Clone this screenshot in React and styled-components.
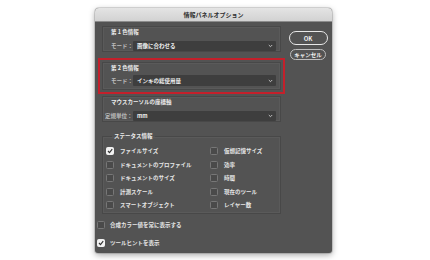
import styled, { createGlobalStyle } from 'styled-components';

const Global = createGlobalStyle`
  body {
    margin: 0;
    background: #ffffff;
    font-family: "Noto Sans CJK JP", "Noto Sans", sans-serif;
  }
`;

const Page = styled.div`
  width: 430px;
  height: 260px;
  padding: 8px 0 0 95px;
  box-sizing: border-box;
`;

const Dialog = styled.div`
  width: 237px;
  height: 245px;
  background: #535353;
  border-radius: 4px 4px 3px 3px;
  box-shadow: 0 2px 6px rgba(0, 0, 0, 0.35), 0 0 0 1px rgba(0, 0, 0, 0.12);
  overflow: hidden;
  display: flex;
  flex-direction: column;
`;

const TitleBar = styled.div`
  height: 13px;
  background: linear-gradient(#e4e4e4, #d2d2d2);
  border-bottom: 1px solid #8c8c8c;
  color: #2e2e2e;
  font-size: 6px;
  font-weight: 700;
  line-height: 13px;
  text-align: center;
`;

const Body = styled.div`
  flex: 1;
  display: flex;
  padding: 3px 4px 0 7px;
  gap: 8px;
`;

const Main = styled.div`
  width: 179px;
  display: flex;
  flex-direction: column;
`;

const Side = styled.div`
  display: flex;
  flex-direction: column;
  align-items: center;
  gap: 4px;
  padding-top: 6px;
  width: 38px;
`;

const Button = styled.div`
  width: ${p => (p.$primary ? 37 : 34)}px;
  height: ${p => (p.$primary ? 12 : 9)}px;
  border: ${p => (p.$primary ? '1.5px solid #e8e8e8' : '1px solid #bdbdbd')};
  border-radius: 8px;
  color: #f0f0f0;
  font-size: ${p => (p.$primary ? 6 : 5.5)}px;
  font-weight: 700;
  display: flex;
  align-items: center;
  justify-content: center;
  box-sizing: content-box;
`;

const Group = styled.div`
  border: 1px solid #484848;
  box-shadow: inset 0 0 0 1px #5a5a5a;
  padding: ${p => p.$pad || '1px 0 2px 8px'};
  margin-top: ${p => p.$top || 0}px;
  height: ${p => p.$h}px;
  box-sizing: border-box;
  ${p => p.$mark && `
    outline: 2px solid #c4202b;
    outline-offset: 2px;
  `}
`;

const GroupLabel = styled.div`
  color: #ececec;
  font-size: 5.5px;
  font-weight: 700;
  line-height: 9px;
  height: 9px;
  margin-left: ${p => p.$indent || 0}px;
`;

const Row = styled.div`
  display: flex;
  align-items: center;
  margin-top: ${p => p.$top}px;
`;

const FieldLabel = styled.div`
  color: #bdbdbd;
  font-size: 5.5px;
  font-weight: 700;
  width: ${p => p.$w}px;
  white-space: nowrap;
`;

const Select = styled.div`
  width: 143px;
  height: ${p => p.$h || 10}px;
  background: #3e3e3e;
  border-radius: 1px;
  display: flex;
  align-items: center;
  justify-content: space-between;
  padding: 0 3px 0 4px;
  box-sizing: border-box;
  color: #f2f2f2;
  font-size: 5.5px;
  font-weight: 700;
`;

const Chevron = () => (
  <svg width="5" height="4" viewBox="0 0 5 4">
    <path d="M0.8 1 L2.5 2.7 L4.2 1" fill="none" stroke="#d0d0d0" strokeWidth="0.9" />
  </svg>
);

const StatusBox = styled.fieldset`
  margin: 10px 0 0 0;
  padding: 6px 0 0 3px;
  height: 82px;
  box-sizing: border-box;
  border: 1px solid #484848;
  box-shadow: inset 0 0 0 1px #5a5a5a;
`;

const Legend = styled.legend`
  color: #ececec;
  font-size: 5.5px;
  font-weight: 700;
  padding: 0 2px;
  margin-left: 6px;
  line-height: 9px;
`;

const CheckGrid = styled.div`
  display: grid;
  grid-template-columns: 104px 70px;
  row-gap: 5.5px;
`;

const Check = styled.div`
  display: flex;
  align-items: center;
  gap: ${p => p.$gap || 6}px;
  height: 8px;
  color: #e6e6e6;
  font-size: 5.5px;
  font-weight: 700;
  white-space: nowrap;
`;

const Box = styled.span`
  width: 6px;
  height: 6px;
  border: 1px solid ${p => (p.$on ? '#f2f2f2' : '#777777')};
  background: ${p => (p.$on ? '#f2f2f2' : '#4a4a4a')};
  border-radius: 1.5px;
  display: flex;
  align-items: center;
  justify-content: center;
  flex-shrink: 0;
`;

const CheckBox = ({ on }) => (
  <Box $on={on}>
    {on && (
      <svg width="6" height="6" viewBox="0 0 6 6">
        <path d="M1 3 L2.5 4.6 L5.2 1.2" fill="none" stroke="#333" strokeWidth="1.2" />
      </svg>
    )}
  </Box>
);

const Footer = styled.div`
  display: flex;
  flex-direction: column;
  gap: 10px;
  padding: 7px 0 0 0;
  margin-left: -5px;
`;

const statusItems = [
  ['ファイルサイズ', true],
  ['仮想記憶サイズ', false],
  ['ドキュメントのプロファイル', false],
  ['効率', false],
  ['ドキュメントのサイズ', false],
  ['時間', false],
  ['計測スケール', false],
  ['現在のツール', false],
  ['スマートオブジェクト', false],
  ['レイヤー数', false],
];

export default function App() {
  return (
    <Page>
      <Global />
      <Dialog>
        <TitleBar>情報パネルオプション</TitleBar>
        <Body>
          <Main>
            <Group $h={26} $top={1}>
              <GroupLabel>第 1 色情報</GroupLabel>
              <Row $top={4}>
                <FieldLabel $w={22}>モード：</FieldLabel>
                <Select>
                  画像に合わせる
                  <Chevron />
                </Select>
              </Row>
            </Group>
            <Group $h={28} $top={10} $mark>
              <GroupLabel>第 2 色情報</GroupLabel>
              <Row $top={2}>
                <FieldLabel $w={22}>モード：</FieldLabel>
                <Select $h={11}>
                  インキの総使用量
                  <Chevron />
                </Select>
              </Row>
            </Group>
            <Group $h={26} $top={6} $pad="1px 0 2px 2px">
              <GroupLabel $indent={6}>マウスカーソルの座標軸</GroupLabel>
              <Row $top={4}>
                <FieldLabel $w={28}>定規単位：</FieldLabel>
                <Select>
                  mm
                  <Chevron />
                </Select>
              </Row>
            </Group>
            <StatusBox>
              <Legend>ステータス情報</Legend>
              <CheckGrid>
                {statusItems.map(([label, on]) => (
                  <Check key={label}>
                    <CheckBox on={on} />
                    {label}
                  </Check>
                ))}
              </CheckGrid>
            </StatusBox>
            <Footer>
              <Check $gap={5}>
                <CheckBox />
                合成カラー値を常に表示する
              </Check>
              <Check $gap={5}>
                <CheckBox on />
                ツールヒントを表示
              </Check>
            </Footer>
          </Main>
          <Side>
            <Button $primary>OK</Button>
            <Button>キャンセル</Button>
          </Side>
        </Body>
      </Dialog>
    </Page>
  );
}
